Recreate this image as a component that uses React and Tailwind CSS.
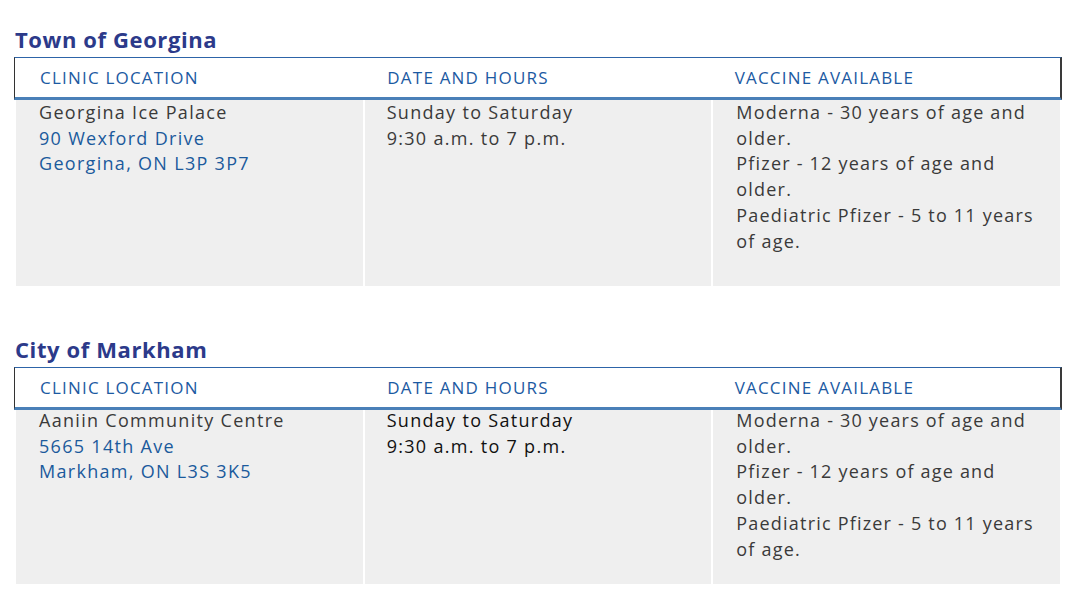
import React from "react";

const clinics = [
  {
    town: "Town of Georgina",
    name: "Georgina Ice Palace",
    street: "90 Wexford Drive",
    city: "Georgina, ON L3P 3P7",
    hoursColor: "text-[#3a3a3a]",
    pad: "pt-[25px]",
    bodyH: "h-[186px]",
    bodyPad: "pt-0",
  },
  {
    town: "City of Markham",
    name: "Aaniin Community Centre",
    street: "5665 14th Ave",
    city: "Markham, ON L3S 3K5",
    hoursColor: "text-[#111111]",
    pad: "pt-[49px]",
    bodyH: "h-[174px]",
    bodyPad: "-mt-[2px]",
  },
];

function ClinicTable({ clinic }) {
  return (
    <div className={clinic.pad}>
      <h2 className="pl-[15px] text-[22px] leading-[28px] font-bold text-[#2c3a8a] tracking-[0.6px]">
        {clinic.town}
      </h2>
      <div className="ml-[14px] w-[1048px] mt-[4px]">
        <div className="grid grid-cols-3 h-[43px] items-center border-t border-t-[#2d64a8] border-l border-l-[#333] border-r-2 border-r-[#3a3a3a] border-b-[3px] border-b-[#4a80b8] text-[17px] tracking-[1.2px] text-[#1c5aa2]">
          <div className="pl-[25px]">CLINIC LOCATION</div>
          <div className="pl-[24px]">DATE AND HOURS</div>
          <div className="pl-[23px]">VACCINE AVAILABLE</div>
        </div>
        <div className="ml-[2px] w-[1044px] grid grid-cols-3 gap-[2px] text-[18px] leading-[25.7px] tracking-[1.3px]">
          <div className={`bg-[#efefef] ${clinic.bodyH} pl-[23px]`}>
            <div className={clinic.bodyPad}>
              <div className="text-[#3a3a3a]">{clinic.name}</div>
              <div className="text-[#1b5a9c]">{clinic.street}</div>
              <div className="text-[#1b5a9c]">{clinic.city}</div>
            </div>
          </div>
          <div className={`bg-[#efefef] pl-[22px] ${clinic.hoursColor}`}>
            <div className={clinic.bodyPad}>
              <div>Sunday to Saturday</div>
              <div>9:30 a.m. to 7 p.m.</div>
            </div>
          </div>
          <div className="bg-[#efefef] pl-[23px] pr-[20px] text-[#3a3a3a] tracking-[1.2px]">
            <div className={clinic.bodyPad}>
              <div>Moderna - 30 years of age and older.</div>
              <div>Pfizer - 12 years of age and older.</div>
              <div>Paediatric Pfizer - 5 to 11 years of age.</div>
            </div>
          </div>
        </div>
      </div>
    </div>
  );
}

export default function App() {
  return (
    <div className="w-[1080px] h-[610px] bg-white overflow-hidden font-['Open_Sans',sans-serif]">
      {clinics.map((c) => (
        <ClinicTable key={c.town} clinic={c} />
      ))}
    </div>
  );
}
